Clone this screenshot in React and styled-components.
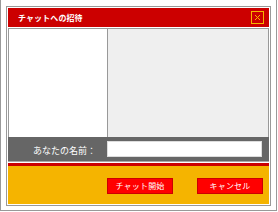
import React from "react";
import styled, { createGlobalStyle } from "styled-components";

const GlobalStyle = createGlobalStyle`
  body {
    margin: 0;
    background: #ffffff;
    font-family: "Noto Sans CJK JP", "Noto Sans", sans-serif;
  }
`;

function CloseIcon() {
  return (
    <svg width="13" height="13" viewBox="0 0 13 13">
      <rect x="0.5" y="0.5" width="12" height="12" fill="none" stroke="#f5b400" />
      <path d="M4 4 L9 9 M9 4 L4 9" stroke="#f5b400" strokeWidth="1" fill="none" />
    </svg>
  );
}

function App() {
  return (
    <>
      <GlobalStyle />
      <Frame>
        <Dialog>
          <TitleBar>
            <Title>チャットへの招待</Title>
            <CloseButton>
              <CloseIcon />
            </CloseButton>
          </TitleBar>
          <Panel>
            <Pane />
            <Pane $shade />
          </Panel>
          <NameBar>
            <Label>あなたの名前：</Label>
            <NameInput type="text" />
          </NameBar>
          <RedLine />
          <Footer>
            <Button>チャット開始</Button>
            <Button>キャンセル</Button>
          </Footer>
        </Dialog>
      </Frame>
    </>
  );
}

export default App;

const Frame = styled.div`
  width: 277px;
  height: 211px;
  box-sizing: border-box;
  border: 1px solid #999999;
  border-top: none;
  padding: 6px 5px 4px 5px;
`;

const Dialog = styled.div`
  width: 265px;
  height: 200px;
  box-sizing: border-box;
  border: 1px solid #999999;
  padding: 1px;
  background: #ffffff;
  display: flex;
  flex-direction: column;
`;

const TitleBar = styled.div`
  height: 19px;
  flex-shrink: 0;
  background: #cc0000;
  display: flex;
  justify-content: space-between;
  align-items: center;
  padding: 0 5px 0 10px;
  margin-bottom: 1px;
`;

const Title = styled.div`
  color: #ffffff;
  font-size: 8px;
  font-weight: bold;
  line-height: 1;
  letter-spacing: 0.1px;
`;

const CloseButton = styled.div`
  width: 13px;
  height: 13px;
  display: flex;
`;

const Panel = styled.div`
  height: 109px;
  flex-shrink: 0;
  box-sizing: border-box;
  border: 1px solid #999999;
  border-bottom: none;
  display: grid;
  grid-template-columns: 98px 160px;
  column-gap: 1px;
  background: #999999;
`;

const Pane = styled.div`
  background: ${(p) => (p.$shade ? "#efefef" : "#ffffff")};
`;

const NameBar = styled.div`
  height: 24px;
  flex-shrink: 0;
  background: #666666;
  border-bottom: 1px solid #aaaaaa;
  display: flex;
  align-items: center;
  margin-bottom: 1px;
`;

const Label = styled.div`
  width: 88px;
  margin-right: 11px;
  text-align: right;
  color: #ffffff;
  font-size: 9px;
  line-height: 1;
  padding-top: 3px;
`;

const NameInput = styled.input`
  width: 155px;
  height: 16px;
  box-sizing: border-box;
  border: 1px solid #dddddd;
  background: #ffffff;
  margin: 0;
  padding: 0 2px;
  outline: none;
`;

const RedLine = styled.div`
  height: 3px;
  flex-shrink: 0;
  background: #cc0000;
`;

const Footer = styled.div`
  flex: 1;
  background: #f5b400;
  display: flex;
  justify-content: flex-end;
  align-items: flex-start;
  gap: 24px;
  padding: 12px 6px 0 0;
`;

const Button = styled.div`
  width: 66px;
  height: 16px;
  box-sizing: border-box;
  background: #ff0000;
  border: 1px solid #cc0000;
  color: #ffffff;
  font-size: 8px;
  line-height: 14px;
  text-align: center;
  letter-spacing: 0.2px;
`;
